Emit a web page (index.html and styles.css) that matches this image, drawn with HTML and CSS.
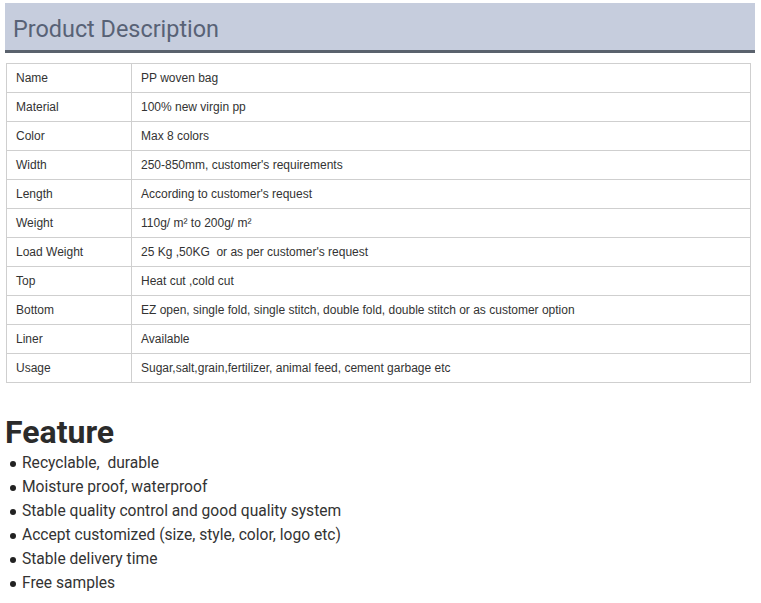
FILE: index.html
```html
<!DOCTYPE html>
<html>
<head>
<meta charset="utf-8">
<link rel="stylesheet" href="styles.css">
</head>
<body>
<div class="page">
  <h2 class="section-title">Product Description</h2>
  <table class="spec">
    <tr><td class="k">Name</td><td>PP woven bag</td></tr>
    <tr><td class="k">Material</td><td>100% new virgin pp</td></tr>
    <tr><td class="k">Color</td><td>Max 8 colors</td></tr>
    <tr><td class="k">Width</td><td>250-850mm, customer's requirements</td></tr>
    <tr><td class="k">Length</td><td>According to customer's request</td></tr>
    <tr><td class="k">Weight</td><td>110g/ m² to 200g/ m²</td></tr>
    <tr><td class="k">Load Weight</td><td>25 Kg ,50KG&nbsp; or as per customer's request</td></tr>
    <tr><td class="k">Top</td><td>Heat cut ,cold cut</td></tr>
    <tr><td class="k">Bottom</td><td>EZ open, single fold, single stitch, double fold, double stitch or as customer option</td></tr>
    <tr><td class="k">Liner</td><td>Available</td></tr>
    <tr><td class="k">Usage</td><td>Sugar,salt,grain,fertilizer, animal feed, cement garbage etc</td></tr>
  </table>
  <h1 class="feature-title">Feature</h1>
  <ul class="features">
    <li>Recyclable,&nbsp; durable</li>
    <li>Moisture proof, waterproof</li>
    <li>Stable quality control and good quality system</li>
    <li>Accept customized (size, style, color, logo etc)</li>
    <li>Stable delivery time</li>
    <li>Free samples</li>
  </ul>
</div>
</body>
</html>
```
FILE: styles.css
```css
html, body { margin: 0; padding: 0; background: #fff; }
.page { padding: 3px 6px 0 5px; }
.section-title {
  margin: 0;
  height: 47px;
  line-height: 53px;
  padding-left: 8px;
  background: #c6cddd;
  border-bottom: 3px solid #5a626d;
  font-family: Roboto, "Noto Sans", sans-serif;
  font-weight: 400;
  font-size: 23.4px;
  color: #586276;
}
.spec {
  margin: 10px 0 0 1px;
  width: 745px;
  border-collapse: collapse;
  font-family: "Liberation Sans", Arial, sans-serif;
  font-size: 12px;
  color: #333;
}
.spec td {
  border: 1px solid #cfcfcf;
  height: 28px;
  padding: 0 0 0 9px;
  vertical-align: middle;
}
.spec td.k { width: 115px; }
.feature-title {
  margin: 30px 0 0 0;
  font-family: Roboto, "Open Sans", sans-serif;
  font-weight: 700;
  font-size: 32px;
  line-height: 38px;
  color: #2b2b2b;
}
.features {
  list-style: none;
  margin: 0;
  padding: 0 0 0 5px;
  font-family: Roboto, "Open Sans", sans-serif;
  font-size: 15.6px;
  line-height: 24px;
  color: #333;
}
.features li {
  display: flex;
  align-items: center;
  gap: 6px;
  height: 24px;
}
.features li::before {
  content: "";
  width: 6px;
  height: 6px;
  border-radius: 50%;
  background: #222;
  margin-top: 2px;
}
```
